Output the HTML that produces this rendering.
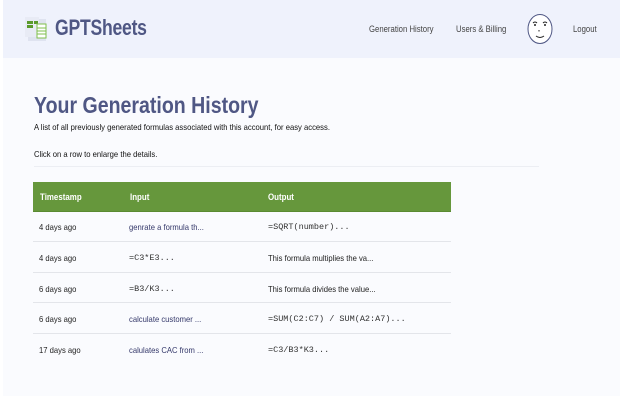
<!DOCTYPE html>
<html><head><style>
body{margin:0;width:640px;height:400px;background:#fff;font-family:"Liberation Sans",sans-serif;position:relative;overflow:hidden}
.page{position:absolute;left:3px;top:0;width:617px;height:396px;background:#fafbfe}
.hdr{position:absolute;left:0;top:0;width:617px;height:58px;background:#eff2fc}
.sx{transform-origin:0 0;white-space:nowrap}
.logo{position:absolute;left:52px;top:15px;font-size:22px;font-weight:bold;color:#4f5784;transform:scaleX(0.8);transform-origin:0 0;letter-spacing:-0.3px}
.nav{position:absolute;top:24px;font-size:9px;color:#444;transform:scaleX(0.86);transform-origin:0 0;white-space:nowrap}
h1{position:absolute;left:31px;top:92px;margin:0;font-size:23px;color:#4f5784;font-weight:bold;transform:scaleX(0.85);transform-origin:0 0;white-space:nowrap}
.t{position:absolute;font-size:8.5px;color:#111;transform:scaleX(0.9);transform-origin:0 0;white-space:nowrap}
.hr{position:absolute;left:31px;width:505px;height:1px;background:#eceef3}
.th{position:absolute;left:30px;top:182px;width:418px;height:29px;background:#66973c;border-bottom:1px solid #5a8a32}
.th span{position:absolute;top:10px;font-size:9px;font-weight:bold;color:#fff;transform:scaleX(0.88);transform-origin:0 0}
.c{position:absolute;font-size:8.5px;color:#222;transform:scaleX(0.9);transform-origin:0 0;white-space:nowrap}
.in{color:#34386a}
.m{font-family:"Liberation Mono",monospace;font-size:8.5px;color:#333;transform:none}
.sep{position:absolute;left:30px;width:418px;height:1px;background:#e3e5ea}
</style></head><body>
<div class="page">
<div class="hdr">
<svg style="position:absolute;left:22px;top:15px" width="26" height="28" viewBox="0 0 26 28">
<rect x="3" y="4" width="18" height="22" fill="#dfe3f0"/>
<rect x="0" y="2" width="14" height="20" fill="#e8ebf5"/>
<rect x="2" y="6" width="6" height="3" fill="#5a9a2c"/>
<rect x="9" y="6" width="4" height="3" fill="#5a9a2c"/>
<rect x="2" y="10" width="6" height="3" fill="#5a9a2c"/>
<rect x="12" y="9" width="9" height="14" fill="#fff" stroke="#7fbf4c" stroke-width="1"/>
<line x1="12" y1="13" x2="21" y2="13" stroke="#7fbf4c"/><line x1="12" y1="16" x2="21" y2="16" stroke="#7fbf4c"/><line x1="12" y1="19" x2="21" y2="19" stroke="#7fbf4c"/>
</svg>
<div class="logo">GPTSheets</div>
<div class="nav" style="left:366px">Generation History</div>
<div class="nav" style="left:453px">Users &amp; Billing</div>
<svg style="position:absolute;left:523px;top:13px" width="28" height="32" viewBox="0 0 28 32">
<ellipse cx="14" cy="16" rx="12" ry="14.5" fill="#fff" stroke="#4f5784" stroke-width="1"/>
<path d="M7 10 q2-2 4 0 M17 10 q2-2 4 0" stroke="#222" fill="none" stroke-width="1"/>
<circle cx="9" cy="12" r="1" fill="#222"/><circle cx="19" cy="12" r="1" fill="#222"/>
<path d="M13 17 v1.5" stroke="#222"/>
<path d="M10 23 q4 3 8 0" stroke="#222" fill="none"/>
</svg>
<div class="nav" style="left:570px">Logout</div>
</div>
<h1>Your Generation History</h1>
<div class="t" style="left:31px;top:122px">A list of all previously generated formulas associated with this account, for easy access.</div>
<div class="t" style="left:31px;top:149px">Click on a row to enlarge the details.</div>
<div class="hr" style="top:166px"></div>
<div class="th"><span style="left:7px">Timestamp</span><span style="left:97px">Input</span><span style="left:235px">Output</span></div>

<div class="c" style="left:36px;top:222px">4 days ago</div><div class="c in" style="left:126px;top:222px">genrate a formula th...</div><div class="c m" style="left:265px;top:222px">=SQRT(number)...</div>
<div class="sep" style="top:241px"></div>
<div class="c" style="left:36px;top:253px">4 days ago</div><div class="c m in" style="left:126px;top:253px">=C3*E3...</div><div class="c" style="left:265px;top:253px">This formula multiplies the va...</div>
<div class="sep" style="top:272px"></div>
<div class="c" style="left:36px;top:284px">6 days ago</div><div class="c m in" style="left:126px;top:284px">=B3/K3...</div><div class="c" style="left:265px;top:284px">This formula divides the value...</div>
<div class="sep" style="top:302px"></div>
<div class="c" style="left:36px;top:314px">6 days ago</div><div class="c in" style="left:126px;top:314px">calculate  customer ...</div><div class="c m" style="left:265px;top:314px">=SUM(C2:C7) / SUM(A2:A7)...</div>
<div class="sep" style="top:333px"></div>
<div class="c" style="left:36px;top:345px">17 days ago</div><div class="c in" style="left:126px;top:345px">calulates  CAC from ...</div><div class="c m" style="left:265px;top:345px">=C3/B3*K3...</div>
</div>
</body></html>
